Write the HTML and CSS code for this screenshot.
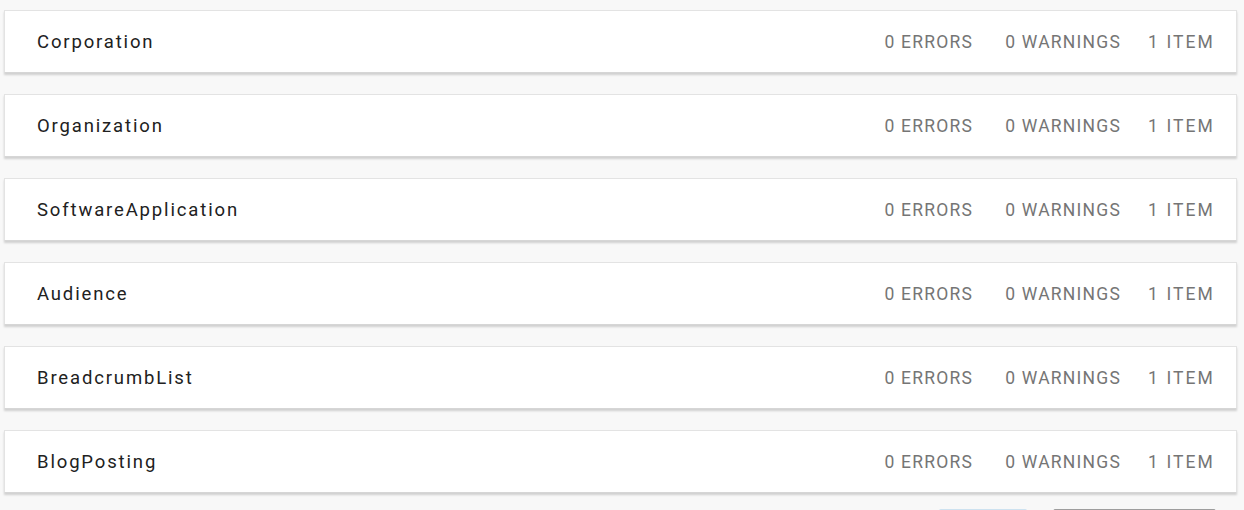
FILE: index.html
```html
<!DOCTYPE html>
<html lang="en">
<head>
<meta charset="utf-8">
<title>Detected items</title>
<link rel="stylesheet" href="styles.css">
</head>
<body>
<main class="list">
  <section class="card">
    <span class="card-title">Corporation</span>
    <div class="stats"><span class="stat stat-errors">0 ERRORS</span><span class="stat stat-warnings">0 WARNINGS</span><span class="stat stat-items">1 ITEM</span></div>
  </section>
  <section class="card">
    <span class="card-title">Organization</span>
    <div class="stats"><span class="stat stat-errors">0 ERRORS</span><span class="stat stat-warnings">0 WARNINGS</span><span class="stat stat-items">1 ITEM</span></div>
  </section>
  <section class="card">
    <span class="card-title">SoftwareApplication</span>
    <div class="stats"><span class="stat stat-errors">0 ERRORS</span><span class="stat stat-warnings">0 WARNINGS</span><span class="stat stat-items">1 ITEM</span></div>
  </section>
  <section class="card">
    <span class="card-title">Audience</span>
    <div class="stats"><span class="stat stat-errors">0 ERRORS</span><span class="stat stat-warnings">0 WARNINGS</span><span class="stat stat-items">1 ITEM</span></div>
  </section>
  <section class="card">
    <span class="card-title">BreadcrumbList</span>
    <div class="stats"><span class="stat stat-errors">0 ERRORS</span><span class="stat stat-warnings">0 WARNINGS</span><span class="stat stat-items">1 ITEM</span></div>
  </section>
  <section class="card">
    <span class="card-title">BlogPosting</span>
    <div class="stats"><span class="stat stat-errors">0 ERRORS</span><span class="stat stat-warnings">0 WARNINGS</span><span class="stat stat-items">1 ITEM</span></div>
  </section>
  <div class="actions">
    <button class="btn btn-light" aria-label="Close"></button>
    <button class="btn btn-outline" aria-label="Run test"></button>
  </div>
</main>
</body>
</html>
```
FILE: styles.css
```css
html, body {
  margin: 0;
  padding: 0;
  background: #f8f8f8;
  height: 100%;
  overflow: hidden;
}

body {
  font-family: Roboto, "Liberation Sans", Arial, sans-serif;
  color: #212121;
}

.list {
  display: flex;
  flex-direction: column;
  gap: 21px;
  padding: 10px 0 0 4px;
  width: 1233px;
}

.card {
  box-sizing: border-box;
  height: 63px;
  display: flex;
  align-items: center;
  justify-content: space-between;
  background: #ffffff;
  border: 1px solid #e3e3e3;
  border-bottom-color: #d6d6d6;
  box-shadow: 0 2px 2px rgba(0, 0, 0, 0.16);
  padding: 0 21px 0 32px;
}

.card-title {
  font-size: 18.5px;
  letter-spacing: 0.1em;
  color: #212121;
}

.stats {
  display: flex;
  align-items: baseline;
}

.stat {
  font-size: 17.5px;
  letter-spacing: 0.07em;
  color: #757575;
}

.stat-errors {
  margin-right: 32px;
}

.stat-warnings {
  margin-right: 27px;
}

.stat-items {
  letter-spacing: 0.12em;
}

.actions {
  display: flex;
  justify-content: flex-end;
  gap: 26px;
  padding-right: 21px;
  margin-top: -5px;
}

.btn {
  height: 36px;
  border-radius: 2px;
  font-family: inherit;
  font-size: 14px;
  color: #757575;
  padding: 0;
}

.btn-light {
  width: 88px;
  background: #cde2f0;
  border: none;
}

.btn-outline {
  width: 163px;
  background: #ffffff;
  border: 1px solid #9e9e9e;
}
```
